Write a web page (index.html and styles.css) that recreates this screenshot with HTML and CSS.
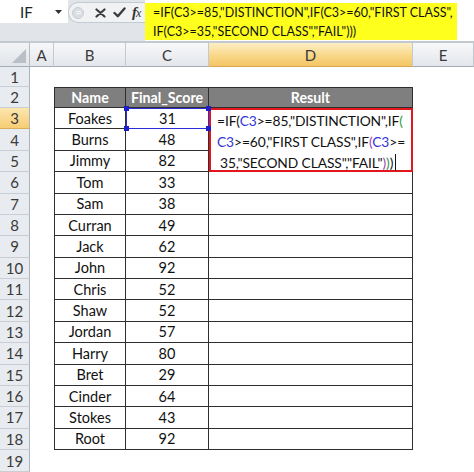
FILE: index.html
```html
<!DOCTYPE html>
<html>
<head>
<meta charset="utf-8">
<link rel="stylesheet" href="styles.css">
</head>
<body>
<div class="app">
  <div class="toolbar">
    <div class="namebox-col">
      <div class="namebox">
        <span class="nb-text">IF</span>
        <svg class="nb-arrow" width="7" height="4" viewBox="0 0 7 4"><path d="M0 0H7L3.5 4Z" fill="#333"/></svg>
      </div>
    </div>
    <div class="controls-col">
      <div class="controls">
        <span class="grip"><span class="grip-lines"></span></span>
        <svg class="icon-x" width="11" height="10" viewBox="0 0 11 10"><path d="M1.5 1.5L9.5 8.5M9.5 1.5L1.5 8.5" stroke="#3d3d3d" stroke-width="2.2" stroke-linecap="round"/></svg>
        <svg class="icon-ok" width="13" height="11" viewBox="0 0 13 11"><path d="M1.5 6L4.8 9.2L11.5 1.5" stroke="#3d3d3d" stroke-width="2.4" fill="none" stroke-linecap="round" stroke-linejoin="round"/></svg>
        <span class="fx"><i>f</i><span class="fx-x">x</span></span>
      </div>
    </div>
    <div class="formula-col">
      <div class="formula">
        <div>=IF(C3&gt;=85,"DISTINCTION",IF(C3&gt;=60,"FIRST CLASS",</div>
        <div>IF(C3&gt;=35,"SECOND CLASS","FAIL")))</div>
      </div>
    </div>
  </div>

  <div class="sheet">
    <div class="corner"><svg width="14" height="14" viewBox="0 0 14 14"><path d="M14 0V14H0Z" fill="#b9bfc6"/></svg></div>
    <div class="ch">A</div><div class="ch">B</div><div class="ch">C</div><div class="ch act">D</div><div class="ch">E</div>

    <div class="rh">1</div><div></div><div></div><div></div><div></div><div></div>

    <div class="rh">2</div><div></div>
    <div class="t first th">Name</div><div class="t th">Final_Score</div><div class="t th">Result</div><div></div>

    <div class="rh act">3</div><div></div>
    <div class="t first">Foakes</div>
    <div class="t ref">31<span class="hd tl"></span><span class="hd tr"></span><span class="hd bl"></span><span class="hd br"></span></div>
    <div class="fcell">
      <div>=IF(<span class="r">C3</span>&gt;=85,"DISTINCTION",IF<span class="g">(</span></div>
      <div><span class="r">C3</span>&gt;=60,"FIRST CLASS",IF<span class="p">(</span><span class="r">C3</span>&gt;=</div>
      <div class="l3">35,"SECOND CLASS","FAIL"<span class="p">)</span><span class="g">)</span>)<span class="caret"></span></div>
    </div>
    <div></div>

    <div class="rh">4</div><div></div><div class="t first">Burns</div><div class="t">48</div><div></div>
    <div class="rh">5</div><div></div><div class="t first">Jimmy</div><div class="t">82</div><div></div>
    <div class="rh">6</div><div></div><div class="t first">Tom</div><div class="t">33</div><div class="t"></div><div></div>
    <div class="rh">7</div><div></div><div class="t first">Sam</div><div class="t">38</div><div class="t"></div><div></div>
    <div class="rh">8</div><div></div><div class="t first">Curran</div><div class="t">49</div><div class="t"></div><div></div>
    <div class="rh">9</div><div></div><div class="t first">Jack</div><div class="t">62</div><div class="t"></div><div></div>
    <div class="rh">10</div><div></div><div class="t first">John</div><div class="t">92</div><div class="t"></div><div></div>
    <div class="rh">11</div><div></div><div class="t first">Chris</div><div class="t">52</div><div class="t"></div><div></div>
    <div class="rh">12</div><div></div><div class="t first">Shaw</div><div class="t">52</div><div class="t"></div><div></div>
    <div class="rh">13</div><div></div><div class="t first">Jordan</div><div class="t">57</div><div class="t"></div><div></div>
    <div class="rh">14</div><div></div><div class="t first">Harry</div><div class="t">80</div><div class="t"></div><div></div>
    <div class="rh">15</div><div></div><div class="t first">Bret</div><div class="t">29</div><div class="t"></div><div></div>
    <div class="rh">16</div><div></div><div class="t first">Cinder</div><div class="t">64</div><div class="t"></div><div></div>
    <div class="rh">17</div><div></div><div class="t first">Stokes</div><div class="t">43</div><div class="t"></div><div></div>
    <div class="rh">18</div><div></div><div class="t first">Root</div><div class="t">92</div><div class="t"></div><div></div>
    <div class="rh">19</div><div></div><div></div><div></div><div></div><div></div>
  </div>
</div>
</body>
</html>
```

FILE: styles.css
```css
* { box-sizing: border-box; }
html, body { margin: 0; padding: 0; }
body {
  width: 474px;
  height: 472px;
  overflow: hidden;
  background: #fff;
  font-family: Lato, "Open Sans", sans-serif;
  color: #111;
}

/* ---------- toolbar ---------- */
.toolbar {
  display: flex;
  height: 43px;
  background: #e1e4e8;
  border-bottom: 2px solid #c3c9d0;
}
.namebox-col { width: 68px; }
.namebox {
  height: 23px;
  background: #fff;
  display: flex;
  align-items: center;
  padding-left: 20px;
  padding-top: 1px;
  font-size: 15px;
  color: #222;
}
.nb-arrow { margin-left: auto; margin-right: 6px; }

.controls-col { width: 77px; }
.controls {
  height: 21px;
  margin-top: 2px;
  border: 1px solid #c4cad1;
  border-right: none;
  border-radius: 10px 0 0 10px;
  background: #f1f2f4;
  display: flex;
  align-items: center;
  padding-left: 3px;
}
.grip {
  width: 12px;
  height: 12px;
  border-radius: 50%;
  background: #dadee3;
  border: 1px solid #c8cdd3;
  display: flex;
  align-items: center;
  justify-content: center;
}
.grip-lines {
  width: 5px;
  height: 3px;
  border-top: 1px solid #f4f5f7;
  border-bottom: 1px solid #f4f5f7;
}
.icon-x { margin-left: 11px; }
.icon-ok { margin-left: 7px; }
.fx {
  margin-left: 6px;
  font-family: "Liberation Serif", serif;
  font-style: italic;
  font-size: 15px;
  color: #333;
  letter-spacing: -1px;
}
.fx i { font-weight: 700; }
.fx-x { font-size: 12px; }

.formula-col {
  flex: 1;
  background: #fff;
  padding-top: 3px;
}
.formula {
  width: 312px;
  height: 37px;
  background: #ffff1e;
  padding-left: 8px;
  font-size: 12.5px;
  line-height: 19px;
  white-space: nowrap;
  color: #111;
}

/* ---------- sheet ---------- */
.sheet {
  display: grid;
  grid-template-columns: 30px 24px 72px 83px 204px 61px;
  grid-template-rows: 24px 20px 21px repeat(16, 21.375px) 22px;
  font-size: 15px;
}
.corner {
  background: linear-gradient(#f2f4f6, #e2e5e9);
  border-right: 1px solid #b5bcc5;
  border-bottom: 1px solid #a2abb6;
  display: flex;
  align-items: flex-end;
  justify-content: flex-end;
  padding: 0 3px 3px 0;
}
.ch {
  background: linear-gradient(#f7f8fa, #e3e6ea);
  border-right: 1px solid #c3c9d0;
  border-bottom: 1px solid #a2abb6;
  display: flex;
  align-items: center;
  justify-content: center;
  color: #3a3a3a;
}
.ch.act {
  background: linear-gradient(#fdeec6, #f9d98d 50%, #f4c565);
  border-bottom-color: #d7a64e;
}
.rh {
  background: #e8ebef;
  border-right: 1px solid #a9b2bd;
  border-bottom: 1px solid #c9ced5;
  display: flex;
  align-items: center;
  justify-content: center;
  color: #3a3a3a;
}
.rh.act {
  background: linear-gradient(#fce6ae, #f6cd74);
  border-bottom-color: #d9ad5a;
}

.t {
  border-right: 1px solid #2e2e2e;
  border-bottom: 1px solid #2e2e2e;
  display: flex;
  align-items: center;
  justify-content: center;
  color: #111;
  font-size: 14.5px;
}
.t.first { border-left: 1px solid #2e2e2e; }
.th {
  background: #7f7f7f;
  color: #fff;
  font-weight: 700;
  border-top: 1px solid #2e2e2e;
  font-size: 14.2px;
}

.ref {
  position: relative;
  border: 1.5px solid #2c2cd8;
}
.hd {
  position: absolute;
  width: 5px;
  height: 5px;
  background: #1e1ec8;
}
.hd.tl { top: -3px; left: -3px; }
.hd.tr { top: -3px; right: -3px; }
.hd.bl { bottom: -3px; left: -3px; }
.hd.br { bottom: -3px; right: -3px; }

.fcell {
  grid-row: span 3;
  border: 2px solid #e3161d;
  padding-left: 6px;
  line-height: 21px;
  white-space: nowrap;
  background: #fff;
  color: #111;
  font-size: 13.8px;
  letter-spacing: -0.1px;
}
.fcell .l3 { padding-left: 3px; }
.r { color: #3535d8; }
.g { color: #2c9a36; }
.p { color: #9a3fc2; }
.caret {
  display: inline-block;
  width: 1px;
  height: 17px;
  background: #111;
  margin-left: 2px;
  vertical-align: -3px;
}
```
